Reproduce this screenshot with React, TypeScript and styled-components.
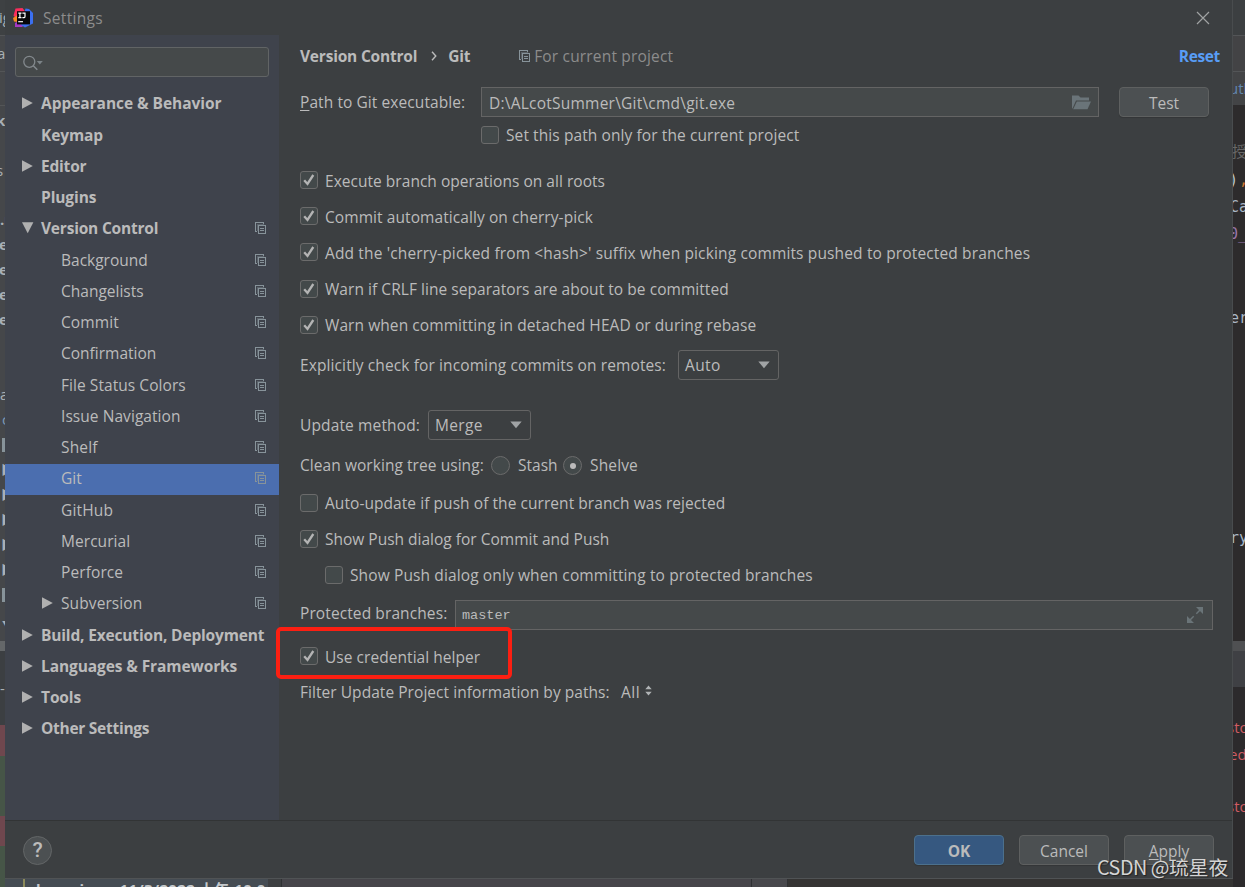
import React from "react";
import styled, { createGlobalStyle } from "styled-components";

const ui = `"Open Sans", "Noto Sans", "Noto Sans CJK SC", sans-serif`;

const Global = createGlobalStyle`
  * { box-sizing: border-box; }
  body { margin: 0; background: #3c3f41; overflow: hidden; font-family: ${ui}; font-size: 15.5px; color: #bbbbbb; }
`;

const Screen = styled.div`
  position: relative;
  display: grid;
  grid-template-columns: 5px 1228px 12px;
  grid-template-rows: 878px 9px;
  width: 1245px;
  height: 887px;
  overflow: hidden;
`;

/* ---------- editor window behind the dialog ---------- */

const Strip = styled.div`
  display: flex;
  flex-direction: column;
  overflow: hidden;
  grid-row: 1 / 3;
`;

const Slice = styled.div<{ $h: number; $bg: string; $fg?: string; $line?: boolean; $shift?: number; $mono?: boolean; $b?: boolean; $size?: number }>`
  flex: none;
  display: flex;
  align-items: center;
  height: ${(p) => p.$h}px;
  background: ${(p) => p.$bg};
  color: ${(p) => p.$fg ?? "#a9b0b5"};
  border-bottom: ${(p) => (p.$line ? "1px solid #535557" : "none")};
  text-indent: ${(p) => p.$shift ?? 0}px;
  font-size: ${(p) => p.$size ?? 15}px;
  font-weight: ${(p) => (p.$b ? 700 : 400)};
  font-family: ${(p) => (p.$mono ? `"DejaVu Sans Mono", "Noto Sans CJK SC", monospace` : ui)};
  line-height: 1;
  white-space: nowrap;
  overflow: hidden;
`;

const Comma = styled.span`
  text-indent: 1px;
  color: #cc7832;
`;

const Bar = styled.span`
  width: 3px;
  height: 14px;
  margin-left: 2px;
  background: #87939a;
`;

const Status = styled.div`
  grid-column: 2;
  grid-row: 2;
  display: flex;
  height: 9px;
  overflow: hidden;
  background: #353433;
  border-top: 1px solid #505355;
`;

const StatusTab = styled.div<{ $w: number; $bg: string; $edge?: boolean }>`
  flex: none;
  width: ${(p) => p.$w}px;
  background: ${(p) => p.$bg};
  border-right: ${(p) => (p.$edge ? "1px solid #2f3133" : "none")};
  overflow: hidden;
`;

const StatusText = styled.div`
  display: flex;
  gap: 35px;
  margin-left: 18px;
  padding-left: 11px;
  height: 9px;
  border-left: 2px solid #8c8a5a;
  overflow: hidden;
  font-weight: 700;
  font-size: 15px;
  letter-spacing: 0.35px;
  line-height: 20px;
  white-space: nowrap;
  color: #c5c9cc;
`;

/* ---------- dialog ---------- */

const Dialog = styled.div`
  grid-column: 2;
  grid-row: 1;
  display: flex;
  flex-direction: column;
  background: #3c3f41;
  border-right: 1px solid #494c4e;
  white-space: nowrap;
`;

const TitleBar = styled.div`
  flex: none;
  display: flex;
  align-items: center;
  height: 35px;
  padding: 1px 22px 0 8px;
  color: #8c8c8c;
  letter-spacing: 0.3px;
`;

const TitleText = styled.span`
  flex: 1;
  margin-left: 9px;
`;

const Body = styled.div`
  flex: 1;
  display: flex;
  min-height: 0;
`;

const Sidebar = styled.div`
  flex: none;
  width: 274px;
  padding-top: 12px;
  background: #3f434c;
`;

const Search = styled.div`
  display: flex;
  align-items: center;
  width: 254px;
  height: 30px;
  margin: 0 0 12px 10px;
  padding: 1px 0 0 7px;
  background: #45494a;
  border: 1px solid #616465;
  border-radius: 3px;
`;

const TreeRow = styled.div<{ $level: number; $on?: boolean; $bold?: boolean }>`
  display: flex;
  align-items: center;
  height: 31.25px;
  padding: 0 13px 2.5px ${(p) => 16 + p.$level * 20}px;
  background: ${(p) => (p.$on ? "#4b6eaf" : "transparent")};
  font-weight: ${(p) => (p.$bold ? 700 : 400)};
`;

const Arrow = styled.span`
  flex: none;
  display: flex;
  width: 20px;
`;

const TreeName = styled.span<{ $ls: number }>`
  flex: 1;
  letter-spacing: ${(p) => p.$ls}px;
`;

const Main = styled.div`
  flex: 1;
  display: flex;
  flex-direction: column;
  padding: 0 12px 0 21px;
`;

const Row = styled.div<{ $h: number; $mt?: number; $indent?: number }>`
  flex: none;
  display: flex;
  align-items: center;
  height: ${(p) => p.$h}px;
  margin-top: ${(p) => p.$mt ?? 0}px;
  padding-left: ${(p) => p.$indent ?? 0}px;
`;

const Label = styled.span<{ $w?: number; $ls?: number; $bold?: boolean; $color?: string; $drop?: number; $lift?: number }>`
  flex: none;
  width: ${(p) => (p.$w ? `${p.$w}px` : "auto")};
  padding-top: ${(p) => p.$drop ?? 0}px;
  padding-bottom: ${(p) => p.$lift ?? 0}px;
  letter-spacing: ${(p) => p.$ls ?? 0}px;
  font-weight: ${(p) => (p.$bold ? 700 : 400)};
  color: ${(p) => p.$color ?? "#bbbbbb"};
`;

const Mnemonic = styled.span`
  text-decoration: underline;
  text-decoration-thickness: 1px;
  text-underline-offset: 2px;
`;

const Spacer = styled.div`
  flex: 1;
`;

const Field = styled.div<{ $w: number; $mono?: boolean }>`
  flex: none;
  display: flex;
  align-items: center;
  justify-content: space-between;
  width: ${(p) => p.$w}px;
  height: 30px;
  padding: 1px ${(p) => (p.$mono ? 9 : 7)}px 0 ${(p) => (p.$mono ? 6 : 7)}px;
  background: #45494a;
  border: 1px solid #646464;
  font-family: ${(p) => (p.$mono ? `"Liberation Mono", monospace` : ui)};
  font-size: ${(p) => (p.$mono ? 13.5 : 15.5)}px;
  letter-spacing: ${(p) => (p.$mono ? 0 : 0.23)}px;
`;

const Button = styled.div<{ $primary?: boolean }>`
  flex: none;
  display: flex;
  align-items: center;
  justify-content: center;
  width: 90px;
  height: 30px;
  padding-top: 1px;
  background: ${(p) => (p.$primary ? "#365880" : "#4c5052")};
  border: 1px solid ${(p) => (p.$primary ? "#4c708c" : "#5e6060")};
  border-radius: 4px;
  box-shadow: 0 1px 1px rgba(0, 0, 0, 0.15);
  font-weight: ${(p) => (p.$primary ? 700 : 400)};
`;

const Combo = styled.div<{ $w: number }>`
  flex: none;
  display: flex;
  align-items: center;
  justify-content: space-between;
  width: ${(p) => p.$w}px;
  height: 30px;
  padding: 0 8px 0 6px;
  border: 1px solid #646464;
  border-radius: 3px;
  letter-spacing: 0.35px;
`;

const Box = styled.span`
  flex: none;
  display: flex;
  width: 18px;
  height: 18px;
  margin-right: 7px;
  background: #43494a;
  border: 1px solid #6b6b6b;
  border-radius: 3px;
`;

const Radio = styled.span`
  flex: none;
  display: flex;
  align-items: center;
  justify-content: center;
  width: 19px;
  height: 19px;
  margin: 0 8px 0 7px;
  background: #43494a;
  border: 1px solid #6b6b6b;
  border-radius: 50%;
`;

const Dot = styled.span`
  width: 6px;
  height: 6px;
  border-radius: 50%;
  background: #bbbbbb;
`;

const Footer = styled.div`
  flex: none;
  display: flex;
  align-items: center;
  gap: 15px;
  height: 58px;
  padding: 1px 18px 0 18px;
  border-top: 1px solid #323435;
`;

const Help = styled.div`
  display: flex;
  align-items: center;
  justify-content: center;
  width: 29px;
  height: 29px;
  border-radius: 50%;
  border: 1px solid #636667;
  background: #4c5052;
  font-family: Roboto, sans-serif;
  font-size: 21px;
  font-weight: 500;
  color: #bcbcbc;
`;

const Highlight = styled.div`
  position: absolute;
  left: 276px;
  top: 627px;
  width: 236px;
  height: 52px;
  border: 4px solid #fc1f12;
  border-radius: 5px;
`;

const Watermark = styled.div`
  position: absolute;
  left: 1097px;
  top: 854px;
  font-family: "Noto Sans CJK SC", sans-serif;
  font-size: 19.8px;
  line-height: 26px;
  white-space: nowrap;
  color: #d4d4d4;
  text-shadow: 1px 1px 1px #222;
`;

const Latin = styled.span`
  letter-spacing: -0.5px;
`;

/* ---------- drawings ---------- */

const Logo = () => (
  <svg width="21" height="20" viewBox="0 0 21 20">
    <path d="M2.5 0.5 9.5 0 12.5 4 5 13 0.5 7.5Z" fill="#fb2d5c" />
    <path d="M0 10 4 7.5 5 14 1 13.5Z" fill="#f98a22" />
    <path d="M2 15 9 11 13 16 9 19 2 19Z" fill="#a638c4" />
    <path d="M12.5 0.5 16 1 20 5 20 15.5 12 19.5 8 17Z" fill="#3b6ff0" />
    <rect x="4" y="3.2" width="13" height="13.2" fill="#08080a" />
    <path d="M5.3 5.2h3.2M6.9 5.2v4.4M5.3 9.6h3.2M9.4 5.2h2.6v3.2q0 1.3-1.3 1.3h-1.3" stroke="#fff" strokeWidth="1.2" fill="none" />
    <rect x="5.2" y="13" width="4.8" height="1.3" fill="#ddd" />
  </svg>
);

const Close = () => (
  <svg width="14" height="14" viewBox="0 0 14 14">
    <path d="M1 1 13 13M13 1 1 13" stroke="#a0a2a3" strokeWidth="1.2" />
  </svg>
);

const SearchIcon = () => (
  <svg width="21" height="16" viewBox="0 0 21 16">
    <circle cx="6.3" cy="6.8" r="5.5" fill="none" stroke="#83898d" strokeWidth="1.3" />
    <path d="M10.3 10.8 14.3 14.8" stroke="#83898d" strokeWidth="1.5" />
    <path d="M13.8 6h6l-3 3.4Z" fill="#7b8387" />
  </svg>
);

const Right = () => (
  <svg width="12" height="12" viewBox="0 0 12 12">
    <path d="M1 0.3 11.8 6 1 11.7Z" fill="#b0b0b0" />
  </svg>
);

const Down = () => (
  <svg width="13" height="12" viewBox="0 0 13 12">
    <path d="M1 0.3H12.4L6.7 11.3Z" fill="#b0b0b0" />
  </svg>
);

const Copy = () => (
  <svg width="11" height="12" viewBox="0 0 11 12" shapeRendering="crispEdges" fill="#87939a">
    <path d="M0 0h9v2H8V1H1v8h1v1H0Z" />
    <path d="M3 3h8v9H3Zm1 1v7h6V4Z" fillRule="evenodd" />
    <path d="M5 6h4v1H5ZM5 8h4v1H5Z" />
    <path d="M2 2h7v1H3v6H2Z" opacity="0.4" />
  </svg>
);

const Folder = () => (
  <svg width="19" height="15" viewBox="0 0 19 15" fill="#6a7479">
    <path d="M0 0.5H6.5L8.5 2.5H17V5.5H4L0.5 13.5H0Z" />
    <path d="M4.8 6.5H19L15.5 14.3H1.2Z" />
  </svg>
);

const Expand = () => (
  <svg width="16" height="16" viewBox="0 0 16 16" fill="#6a7478">
    <path d="M9 0h7v7ZM0 9v7h7Z" />
    <path d="M13.5 2.5 9.3 6.7M2.5 13.5 6.7 9.3" stroke="#6a7478" strokeWidth="1.5" />
  </svg>
);

const ComboArrow = () => (
  <svg width="12" height="8" viewBox="0 0 12 8">
    <path d="M0.3 0.5h11.4L6 7.3Z" fill="#a0a3a5" />
  </svg>
);

const Chevron = () => (
  <svg width="6" height="10" viewBox="0 0 6 10">
    <path d="M1 0.8 4.8 5 1 9.2" stroke="#bbb" strokeWidth="1.4" fill="none" />
  </svg>
);

const UpDown = () => (
  <svg width="7" height="13" viewBox="0 0 7 13" fill="#b0b3b5">
    <path d="M0.3 4.2 3.5 0.5 6.7 4.2ZM0.3 6.8 3.5 10.5 6.7 6.8Z" />
  </svg>
);

const Tick = () => (
  <svg width="16" height="16" viewBox="0 0 16 16">
    <path d="M3.2 8.2 6.5 11.9 12.3 3" stroke="#b4b4b4" strokeWidth="2.3" fill="none" />
  </svg>
);

/* ---------- data ---------- */

type Node = { name: string; level: number; arrow?: "r" | "d"; copy?: boolean; on?: boolean; ls?: number };

const tree: Node[] = [
  { name: "Appearance & Behavior", level: 0, arrow: "r", ls: -0.05 },
  { name: "Keymap", level: 0, ls: -0.1 },
  { name: "Editor", level: 0, arrow: "r", ls: -0.2 },
  { name: "Plugins", level: 0, ls: -0.1 },
  { name: "Version Control", level: 0, arrow: "d", copy: true, ls: -0.2 },
  { name: "Background", level: 1, copy: true },
  { name: "Changelists", level: 1, copy: true },
  { name: "Commit", level: 1, copy: true, ls: 0.1 },
  { name: "Confirmation", level: 1, copy: true },
  { name: "File Status Colors", level: 1, copy: true, ls: 0.06 },
  { name: "Issue Navigation", level: 1, copy: true, ls: 0.06 },
  { name: "Shelf", level: 1, copy: true, ls: 0.15 },
  { name: "Git", level: 1, copy: true, on: true },
  { name: "GitHub", level: 1, copy: true, ls: 0.15 },
  { name: "Mercurial", level: 1, copy: true, ls: 0.05 },
  { name: "Perforce", level: 1, copy: true, ls: 0.1 },
  { name: "Subversion", level: 1, arrow: "r", copy: true, ls: 0.1 },
  { name: "Build, Execution, Deployment", level: 0, arrow: "r", ls: -0.16 },
  { name: "Languages & Frameworks", level: 0, arrow: "r", ls: -0.1 },
  { name: "Tools", level: 0, arrow: "r", ls: -0.1 },
  { name: "Other Settings", level: 0, arrow: "r", ls: -0.27 },
];

type Check = { text: string; on: boolean; h: number; mt?: number; indent?: number; ls?: number; drop?: number };

const CheckRow = ({ text, on, h, mt, indent, ls, drop }: Check) => (
  <Row $h={h} $mt={mt} $indent={indent}>
    <Box>{on && <Tick />}</Box>
    <Label $ls={ls} $drop={drop ?? 1}>{text}</Label>
  </Row>
);

const branchChecks = [
  { text: "Execute branch operations on all roots", ls: 0.03 },
  { text: "Commit automatically on cherry-pick", ls: 0.08 },
  { text: "Add the 'cherry-picked from <hash>' suffix when picking commits pushed to protected branches", ls: 0.14 },
  { text: "Warn if CRLF line separators are about to be committed", ls: 0.05 },
  { text: "Warn when committing in detached HEAD or during rebase", ls: 0.08 },
];

const L = "#45474a";

export default function App() {
  return (
    <>
      <Global />
      <Screen>
        <Strip>
          <Slice $h={36} $bg="#3e4143" $line $shift={-1}>ig</Slice>
          <Slice $h={36} $bg={L} $line $shift={-3}>a</Slice>
          <Slice $h={34} $bg={L} $line />
          <Slice $h={28} $bg={L} $b $shift={-4}>k</Slice>
          <Slice $h={72} $bg={L} $shift={-4}>s</Slice>
          <Slice $h={26} $bg={L} $b>.r</Slice>
          <Slice $h={25} $bg={L} $b $shift={-1}>e</Slice>
          <Slice $h={25} $bg={L} $b $shift={-1}>e</Slice>
          <Slice $h={25} $bg={L} $b $shift={-1}>e</Slice>
          <Slice $h={25} $bg={L} $b $shift={-1}>e</Slice>
          <Slice $h={50} $bg={L} />
          <Slice $h={25} $bg={L}>a</Slice>
          <Slice $h={25} $bg={L} $shift={2} $fg="#7b98b8">c</Slice>
          <Slice $h={25} $bg={L}><Bar /></Slice>
          {[0, 1, 2, 3, 4].map((i) => (
            <Slice key={i} $h={25} $bg={L} $shift={1} $size={13}>▶</Slice>
          ))}
          <Slice $h={25} $bg={L}><Bar /></Slice>
          <Slice $h={34} $bg={L} $shift={2} $size={9}>▼</Slice>
          <Slice $h={10} $bg="#646769" />
          <Slice $h={74} $bg="#3c3f42">-</Slice>
          <Slice $h={31} $bg="#6f474e" />
          <Slice $h={60} $bg="#465547" />
          <Slice $h={30} $bg="#6f474e" />
          <Slice $h={41} $bg="#465547" />
        </Strip>

        <Dialog>
          <TitleBar>
            <Logo />
            <TitleText>Settings</TitleText>
            <Close />
          </TitleBar>
          <Body>
            <Sidebar>
              <Search>
                <SearchIcon />
              </Search>
              {tree.map((n) => (
                <TreeRow key={n.name} $level={n.level} $on={n.on} $bold={n.level === 0}>
                  <Arrow>{n.arrow === "r" ? <Right /> : n.arrow === "d" ? <Down /> : null}</Arrow>
                  <TreeName $ls={n.ls ?? 0}>{n.name}</TreeName>
                  {n.copy && <Copy />}
                </TreeRow>
              ))}
            </Sidebar>
            <Main>
              <Row $h={41}>
                <Label $bold $w={131} $ls={-0.2}>Version Control</Label>
                <Chevron />
                <Label $bold $w={82} $ls={-0.25}>&nbsp;&nbsp;&nbsp;Git</Label>
                <Copy />
                <Label $color="#8c8c8c" $ls={0.17}>&nbsp;For current project</Label>
                <Spacer />
                <Label $bold $color="#589df6" $ls={-0.35}>Reset</Label>
              </Row>
              <Row $h={30} $mt={11}>
                <Label $w={181} $ls={0.08}>
                  <Mnemonic>P</Mnemonic>ath to Git executable:
                </Label>
                <Field $w={618}>
                  D:\ALcotSummer\Git\cmd\git.exe
                  <Folder />
                </Field>
                <Spacer />
                <Button>Test</Button>
                <Row $h={1} $indent={11} />
              </Row>
              <CheckRow h={36} indent={181} on={false} ls={0.09} drop={0} text="Set this path only for the current project" />
              <Row $h={9} />
              {branchChecks.map((c) => (
                <CheckRow key={c.text} h={36.2} on text={c.text} ls={c.ls} />
              ))}
              <Row $h={30} $mt={7}>
                <Label $w={378} $ls={0.11}>Explicitly check for incoming commits on remotes:</Label>
                <Combo $w={101}>
                  Auto
                  <ComboArrow />
                </Combo>
              </Row>
              <Row $h={30} $mt={30}>
                <Label $w={128} $ls={0.14}>Update method:</Label>
                <Combo $w={103}>
                  Merge
                  <ComboArrow />
                </Combo>
              </Row>
              <Row $h={30} $mt={11}>
                <Label $w={184} $ls={0.06} $lift={1}>Clean working tree using:</Label>
                <Radio />
                <Label $w={38} $lift={1}>Stash</Label>
                <Radio>
                  <Dot />
                </Radio>
                <Label $lift={1} $ls={0.15}>Shelve</Label>
              </Row>
              <CheckRow h={36} mt={4} on={false} ls={0.06} text="Auto-update if push of the current branch was rejected" />
              <CheckRow h={36} on text="Show Push dialog for Commit and Push" />
              <CheckRow h={37} indent={25} on={false} ls={0.12} drop={0} text="Show Push dialog only when committing to protected branches" />
              <Row $h={30} $mt={6}>
                <Label $w={155} $ls={0.1} $lift={3}>Protected branches:</Label>
                <Field $w={758} $mono>
                  master
                  <Expand />
                </Field>
              </Row>
              <CheckRow h={36} mt={8} on ls={0.05} drop={2} text="Use credential helper" />
              <Row $h={30} $mt={3}>
                <Label $w={321} $ls={0.05}>Filter Update Project information by paths:</Label>
                <Label $w={24} $ls={0.5}>All</Label>
                <UpDown />
              </Row>
            </Main>
          </Body>
          <Footer>
            <Help>?</Help>
            <Spacer />
            <Button $primary>OK</Button>
            <Button>Cancel</Button>
            <Button>
              <Mnemonic>A</Mnemonic>pply
            </Button>
          </Footer>
        </Dialog>

        <Strip>
          <Slice $h={36} $bg="#3c3f41" $line />
          <Slice $h={36} $bg="#434345" $line />
          <Slice $h={33} $bg="#434446" $shift={-4} $fg="#6186b0">uth</Slice>
          <Slice $h={31} $bg="#2d2b2c" />
          <Slice $h={31} $bg="#2d2b2c" $fg="#686868" $shift={-1}>授</Slice>
          <Slice $h={27} $bg="#2d2b2c" $mono $shift={-4} $fg="#b9c3cd">)<Comma>,</Comma></Slice>
          <Slice $h={27} $bg="#2d2b2c" $mono $shift={-3} $fg="#a9b7c6">Ca</Slice>
          <Slice $h={27} $bg="#2d2b2c" $mono $shift={-4} $fg="#9876aa">0_</Slice>
          <Slice $h={56} $bg="#2d2b2c" />
          <Slice $h={28} $bg="#2d2b2c" $mono $shift={-3} $fg="#a9b7c6">er</Slice>
          <Slice $h={192} $bg="#2d2b2c" />
          <Slice $h={28} $bg="#2d2b2c" $mono $shift={-3} $fg="#a9b7c6">ry</Slice>
          <Slice $h={89} $bg="#2d2b2c" />
          <Slice $h={10} $bg="#4f5052" />
          <Slice $h={36} $bg="#3f4044" />
          <Slice $h={27} $bg="#2c2a2c" />
          <Slice $h={27} $bg="#2c2a2c" $fg="#cf5b63" $shift={-6}>sto</Slice>
          <Slice $h={26} $bg="#2c2a2c" $fg="#cf5b63" $shift={-4}>ed</Slice>
          <Slice $h={26} $bg="#2c2a2c" />
          <Slice $h={26} $bg="#2c2a2c" $fg="#cf5b63" $shift={-6}>sto</Slice>
          <Slice $h={68} $bg="#2c2a2c" />
        </Strip>

        <Status>
          <StatusTab $w={263} $bg="#454c53">
            <StatusText>
              <span>
                k &nbsp; &nbsp; &nbsp; &nbsp;i
              </span>
              <span>11/3/2022 上午 10:0</span>
            </StatusText>
          </StatusTab>
          <StatusTab $w={14} $bg="#3d3f41" $edge />
          <StatusTab $w={470} $bg="#46454a" $edge />
          <StatusTab $w={36} $bg="#48484c" $edge />
        </Status>
        <Highlight />
        <Watermark>
          <Latin>CSDN @</Latin>琉星夜
        </Watermark>
      </Screen>
    </>
  );
}
